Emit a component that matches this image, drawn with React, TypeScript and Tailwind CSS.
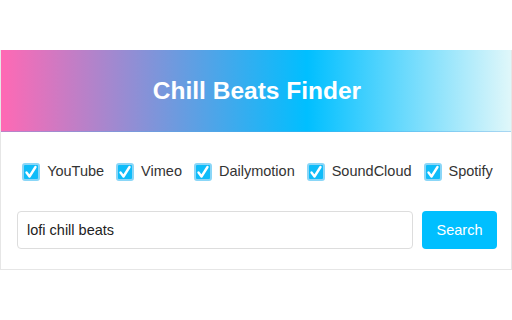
const sources = ['YouTube', 'Vimeo', 'Dailymotion', 'SoundCloud', 'Spotify']

function Check() {
  return (
    <span className="w-[18px] h-[18px] rounded-[3px] bg-[#0fbcf9] border-2 border-[#8ad6f7] flex items-center justify-center shrink-0">
      <svg viewBox="0 0 14 14" className="w-[14px] h-[14px]">
        <path d="M2.5 7.5 L5.5 11.5 L11.5 2" fill="none" stroke="white" strokeWidth="2.4" strokeLinecap="round" strokeLinejoin="round" />
      </svg>
    </span>
  )
}

export default function App() {
  return (
    <div className="h-screen bg-white flex items-center font-['Liberation_Sans',Arial,sans-serif]">
      <div className="w-full border border-[#e6e6e6] border-t-0 bg-white">
        <div className="h-[82px] flex items-center justify-center bg-[linear-gradient(to_right,#ff69b4_0%,#00bfff_60%,#e0f7fa_100%)] border-b border-[#5aa8e6]/40">
          <h1 className="text-white text-[24.5px] font-bold mt-[2px] ml-[2px]">Chill Beats Finder</h1>
        </div>
        <div className="pl-4 pr-[14px] pt-[29px] pb-5">
          <div className="flex items-center justify-center gap-[12px] mb-[29px] ml-px">
            {sources.map(s => (
              <label key={s} className="flex items-center gap-[7px] text-[14.5px] text-[#333]">
                <Check />
                {s}
              </label>
            ))}
          </div>
          <div className="flex gap-[9px]">
            <input
              defaultValue="lofi chill beats"
              className="flex-1 h-[38px] border border-[#ddd] rounded px-[9px] text-[14.5px] text-[#222] outline-none"
            />
            <button className="w-[75px] h-[38px] bg-[#00bfff] text-white text-[14.5px] rounded">Search</button>
          </div>
        </div>
      </div>
    </div>
  )
}
